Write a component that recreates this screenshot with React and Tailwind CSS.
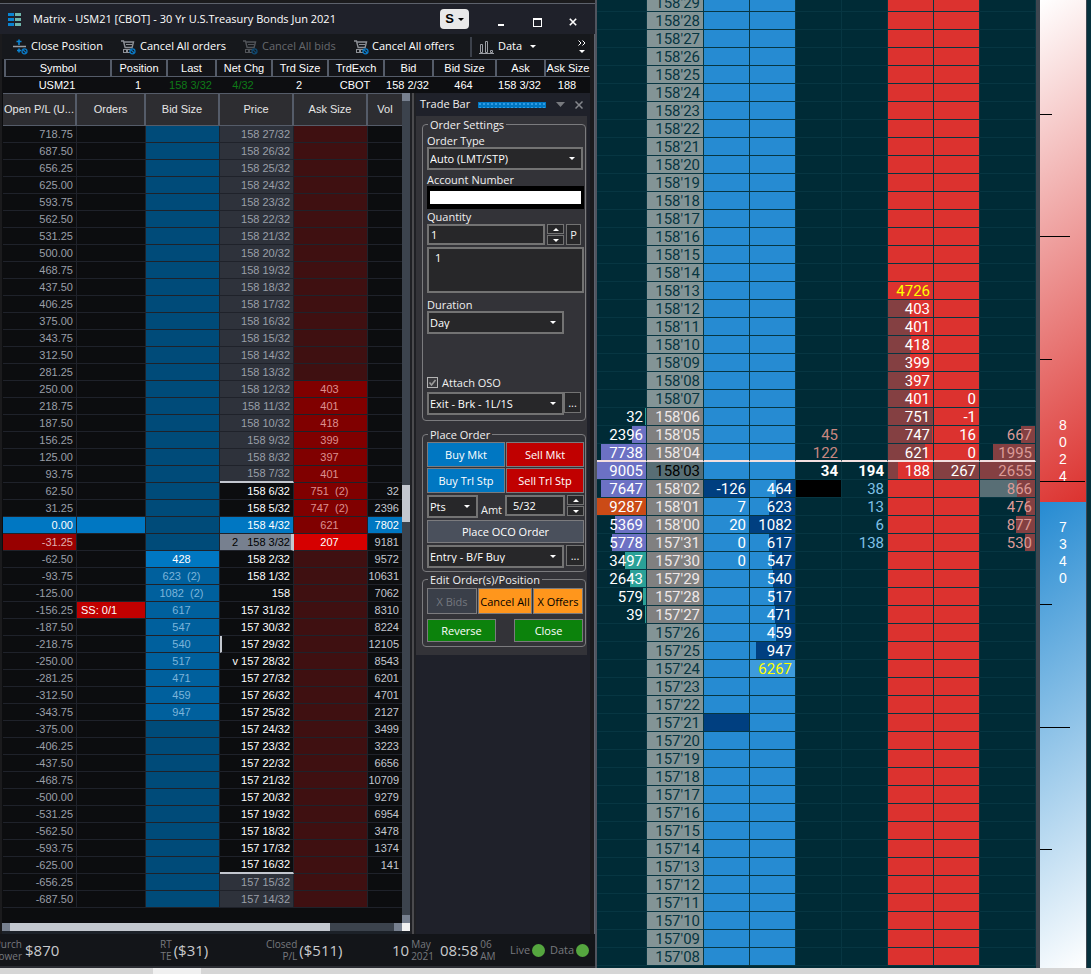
import React, { useState } from "react";
import clsx from "clsx";

const quote = [
  { label: "Symbol", value: "USM21", width: 106 },
  { label: "Position", value: "1", width: 56 },
  { label: "Last", value: "158 3/32", width: 49, up: true },
  { label: "Net Chg", value: "4/32", width: 56, up: true },
  { label: "Trd Size", value: "2", width: 56 },
  { label: "TrdExch", value: "CBOT", width: 56 },
  { label: "Bid", value: "158 2/32", width: 49 },
  { label: "Bid Size", value: "464", width: 63 },
  { label: "Ask", value: "158 3/32", width: 49 },
  { label: "Ask Size", value: "188", width: 46 },
];

// Matrix rows run one tick (1/32) at a time, from 158 27/32 down
const TOP_TICK = 158 * 32 + 27;
const ROW_COUNT = 46;
const ENTRY_ROW = 23;
const LAST_ROW = 24;
const HIGH_ROW = 21;
const LOW_ROW = 43;

const asks = {
  15: "403", 16: "401", 17: "418", 18: "399", 19: "397", 20: "401",
  21: "751  (2)", 22: "747  (2)", 23: "621", 24: "207",
};

const bids = {
  25: "428", 26: "623  (2)", 27: "1082  (2)", 28: "617", 29: "547",
  30: "540", 31: "517", 32: "471", 33: "459", 34: "947",
};

const volumes = [
  32, 2396, 7802, 9181, 9572, 10631, 7062, 8310, 8224, 12105, 8543, 6201,
  4701, 2127, 3499, 3223, 6656, 10709, 9279, 6954, 3478, 1374, 141,
];

const matrixRows = Array.from({ length: ROW_COUNT }, (_, i) => {
  const tick = TOP_TICK - i;
  const rest = tick % 32;
  return {
    i,
    pl: ((ENTRY_ROW - i) * 31.25).toFixed(2),
    price: Math.floor(tick / 32) + (rest ? ` ${rest}/32` : ""),
    bid: bids[i],
    ask: asks[i],
    vol: volumes[i - HIGH_ROW],
  };
});

const violet = "#6c71c4";
const teal = "#2aa198";
const orange = "#cb4b16";
const navy = "#003f80";
const maroon = "#844042";

// Depth rows by price; bars are [percent of the cell, colour]
const depth = {
  "158'13": { ask: "4726", askYellow: true },
  "158'12": { ask: "403", askBar: 50 },
  "158'11": { ask: "401", askBar: 50 },
  "158'10": { ask: "418", askBar: 52 },
  "158'09": { ask: "399", askBar: 50 },
  "158'08": { ask: "397", askBar: 49 },
  "158'07": { ask: "401", askBar: 50, askChg: "0" },
  "158'06": { vol: "32", volBar: [3, teal], ask: "751", askBar: 100, askChg: "-1" },
  "158'05": { vol: "2396", volBar: [29, violet], sold: "45", ask: "747", askBar: 97, askChg: "16", total: "667", totalBar: 25 },
  "158'04": { vol: "7738", volBar: [92, violet], sold: "122", ask: "621", askBar: 82, askChg: "0", total: "1995", totalBar: 76 },
  "158'03": { vol: "9005", volBar: [100, violet], sold: "34", bought: "194", ask: "188", askBar: 22, askChg: "267", total: "2655", totalBar: 100 },
  "158'02": { vol: "7647", volBar: [92, violet], bidChg: "-126", bid: "464", bidBar: 42, bought: "38", total: "866", totalBar: 32 },
  "158'01": { vol: "9287", volBar: [100, orange], bidChg: "7", bid: "623", bidBar: 58, bought: "13", total: "476", totalBar: 17 },
  "158'00": { vol: "5369", volBar: [64, violet], bidChg: "20", bid: "1082", bidBar: 100, bought: "6", total: "877", totalBar: 34 },
  "157'31": { vol: "5778", volBar: [70, violet], bidChg: "0", bid: "617", bidBar: 58, bought: "138", total: "530", totalBar: 19 },
  "157'30": { vol: "3497", volBar: [42, teal], bidChg: "0", bid: "547", bidBar: 51 },
  "157'29": { vol: "2643", volBar: [32, teal], bid: "540", bidBar: 49 },
  "157'28": { vol: "579", volBar: [7, teal], bid: "517", bidBar: 47 },
  "157'27": { vol: "39", volBar: [3, teal], bid: "471", bidBar: 44 },
  "157'26": { bid: "459", bidBar: 42 },
  "157'25": { bid: "947", bidBar: 87 },
  "157'24": { bid: "6267", bidYellow: true },
};

const depthPrices = Array.from({ length: 54 }, (_, i) => {
  const tick = 158 * 32 + 29 - i;
  return `${Math.floor(tick / 32)}'${String(tick % 32).padStart(2, "0")}`;
});

const bar = (side, percent, color) =>
  percent
    ? { backgroundImage: `linear-gradient(to ${side}, ${color} ${percent}%, transparent ${percent}%)` }
    : undefined;

const Caret = ({ className }) => (
  <svg viewBox="0 0 6 3" className={clsx("h-[3px] w-1.5 shrink-0", className)} fill="currentColor">
    <path d="M0 0h6L3 3z" />
  </svg>
);

const CartIcon = () => (
  <svg viewBox="0 0 16 16" className="h-4 w-4 shrink-0" fill="none">
    <path d="M1 2h2.5l1.6 6.5h7L13.5 3H4" stroke="#8d9096" strokeWidth="1.4" />
    <path d="M6 5.5h6" stroke="#8d9096" />
    <rect x="3.5" y="10.5" width="3" height="3" stroke="#8d9096" />
    <rect x="7.5" y="10.5" width="3" height="3" stroke="#8d9096" />
    <circle cx="12.5" cy="12.3" r="2.5" fill="#16181c" stroke="#0a78c4" strokeWidth="1.3" />
    <path d="M10.8 10.6l3.4 3.4" stroke="#0a78c4" strokeWidth="1.2" />
  </svg>
);

const ClosePositionIcon = () => (
  <svg viewBox="0 0 16 16" className="h-4 w-4 shrink-0" fill="none">
    <path d="M7 .5v5.500M4.500 2.500h5M7 9.500v4M5 11.500h4" stroke="#0a84d2" strokeWidth="1.600" />
    <path d="M1 7.500h13" stroke="#9a9da3" strokeWidth="1.500" />
    <circle cx="12.500" cy="12.300" r="2.500" fill="#16181c" stroke="#0a78c4" strokeWidth="1.300" />
    <path d="M10.800 10.600l3.400 3.400" stroke="#0a78c4" strokeWidth="1.200" />
  </svg>
);

const TitleBar = () => (
  <header className="flex h-[31px] items-center border-t border-[#5d626c] bg-[#1f212a] pr-3.5 pl-2 text-white">
    <svg viewBox="0 0 13 13" className="h-[13px] w-[13px] shrink-0">
      <path d="M0 0h6v3H0zM0 5h6v3H0zM0 10h6v3H0z" fill="#0a84d2" />
      <path d="M7 0h6v3H7zM7 5h6v3H7zM7 10h6v3H7z" fill="#6fb5ab" />
    </svg>
    <h1 className="ml-3 flex-1 truncate text-[11px]">
      Matrix - USM21 [CBOT] - 30 Yr U.S.Treasury Bonds Jun 2021
    </h1>
    <button className="mr-6 flex h-5 w-[29px] items-center justify-center gap-1 rounded-sm bg-[#e9e9e9] font-['Liberation_Sans',sans-serif] text-[13px] font-bold text-black">
      S <Caret />
    </button>
    <div className="flex items-center gap-5 pt-1.5">
      <button aria-label="Minimize" className="flex h-4 w-4 items-end justify-center pb-1">
        <span className="h-0.5 w-1.5 bg-white" />
      </button>
      <button aria-label="Maximize" className="flex h-4 w-4 items-center justify-center">
        <span className="h-[9px] w-[9px] border border-t-2 border-white" />
      </button>
      <button aria-label="Close" className="flex h-4 w-4 items-center justify-center">
        <svg viewBox="0 0 8 8" className="h-2 w-2" stroke="white" strokeWidth="1.600">
          <path d="M.8.8l6.400 6.400M7.200.8L.8 7.200" />
        </svg>
      </button>
    </div>
  </header>
);

const Toolbar = () => (
  <nav className="flex h-[25px] items-center bg-[#16181c] pr-1 pl-2.5 text-[11px] whitespace-nowrap text-white">
    <button className="flex w-[108px] items-center gap-[3px]">
      <ClosePositionIcon /> Close Position
    </button>
    <button className="flex w-[122px] items-center gap-1">
      <CartIcon /> Cancel All orders
    </button>
    <button disabled className="flex w-[111px] items-center gap-1 text-[#67696e] [&>svg]:opacity-50">
      <CartIcon /> Cancel All bids
    </button>
    <button className="flex w-[117px] items-center gap-[3px]">
      <CartIcon /> Cancel All offers
    </button>
    <button className="flex h-5 flex-1 items-center gap-1 border-l-2 border-[#3c414b] pl-[7px]">
      <svg viewBox="0 0 15 14" className="h-3.5 w-[15px] shrink-0" fill="none" stroke="#9a9da3">
        <path d="M1.500 12.500v-8h2v8zM6.500 12.500v-11h2v11zM11.500 12.500v-2h2v2zM0 13.500h15" />
      </svg>
      Data <Caret className="ml-1" />
    </button>
    <button aria-label="More commands" className="flex flex-col items-center gap-1">
      <svg viewBox="0 0 8 6" className="h-1.5 w-2" fill="none" stroke="white">
        <path d="M.5.5L3 3 .5 5.500M4.500.5L7 3 4.500 5.500" />
      </svg>
      <Caret />
    </button>
  </nav>
);

const QuoteTable = () => (
  <div className="bg-[#0d0e11] pl-0.5">
    <table className="w-full table-fixed border-separate border-spacing-0 text-center font-['Liberation_Sans',sans-serif] text-[11px] whitespace-nowrap text-white">
      <colgroup>
        {quote.map((q) => (
          <col key={q.label} style={{ width: q.width }} />
        ))}
      </colgroup>
      <thead>
        <tr>
          {quote.map((q) => (
            <th key={q.label} className="h-[18px] border-y border-l-2 border-[#555c69] bg-[#131418] p-0 leading-4 font-normal">
              {q.label}
            </th>
          ))}
        </tr>
      </thead>
      <tbody>
        <tr>
          {quote.map((q) => (
            <td key={q.label} className={clsx("h-4 p-0 leading-4", q.up && "text-[#0f7a18]")}>
              {q.value}
            </td>
          ))}
        </tr>
      </tbody>
    </table>
  </div>
);

const MatrixRow = ({ row }) => {
  const { i } = row;
  const entry = i === ENTRY_ROW;
  const last = i === LAST_ROW;
  const inRange = i >= HIGH_ROW && i <= LOW_ROW;
  const rangeEdge = i === HIGH_ROW - 1 || i === LOW_ROW;
  const cell = "h-[17px] border-r border-b border-[#1f222a] p-0 whitespace-pre";

  return (
    <tr className="leading-4">
      <td
        className={clsx(
          cell, "pr-[3px] text-right",
          entry ? "bg-[#0077c2] text-white" : last ? "bg-[#980000] text-[#e0b0b0]" : "bg-[#0c0d0f] text-[#9a9fa8]"
        )}
      >
        {row.pl}
      </td>
      <td className={clsx(cell, "pl-1", entry ? "bg-[#0077c2]" : i === 28 ? "bg-[#c00000] text-white" : "bg-[#0c0d0f]")}>
        {i === 28 && "SS: 0/1"}
      </td>
      <td
        className={clsx(
          cell, "pr-0.5 text-center",
          !row.bid ? "bg-[#004b79]" : i === 25 ? "bg-[#0077c2] text-white" : "bg-[#00609d] text-[#7cb4da]"
        )}
      >
        {row.bid}
      </td>
      <td
        className={clsx(
          cell, "text-right",
          entry && "bg-[#0077c2] text-white",
          last && "border-r-[3px] border-r-[#c3c7cf] bg-[#77808f] text-black",
          !entry && !last && (inRange ? "bg-[#0c0d0f] text-white" : "bg-[#2e323b] text-[#9a9fa8]"),
          last ? "pr-px" : "pr-[3px]",
          rangeEdge && "border-b-2 border-b-[#c3c7cf] leading-[15px]",
          i === 30 && "border-l-2 border-l-[#c3c7cf]"
        )}
      >
        {last && "2   "}
        {i === 31 && "v "}
        {row.price}
      </td>
      <td
        className={clsx(
          cell, "pr-0.5 text-center",
          !row.ask ? "bg-[#3f1011]" : last ? "bg-[#d60000] text-white" : "bg-[#800000] text-[#dc9090]"
        )}
      >
        {row.ask}
      </td>
      <td className={clsx(cell, "border-r-0 pr-[3px] text-right", entry ? "bg-[#0077c2] text-white" : "bg-[#0c0d0f] text-[#c3c7cf]")}>
        {row.vol}
      </td>
    </tr>
  );
};

const Matrix = () => (
  <section className="flex min-w-0 flex-1 flex-col bg-[#0c0d0f]">
    <div className="flex flex-1">
      <table className="ml-px w-full flex-1 table-fixed self-start border-separate border-spacing-0 font-['Liberation_Sans',sans-serif] text-[11px]">
        <colgroup>
          <col style={{ width: 74 }} />
          <col style={{ width: 69 }} />
          <col style={{ width: 74 }} />
          <col style={{ width: 74 }} />
          <col style={{ width: 74 }} />
          <col style={{ width: 34 }} />
        </colgroup>
        <thead>
          <tr>
            {["Open P/L (U...", "Orders", "Bid Size", "Price", "Ask Size", "Vol"].map((h) => (
              <th key={h} className="h-[33px] border-y border-r-2 border-[#555c69] bg-[#2d2d31] p-0 font-normal whitespace-nowrap text-[#e6e6e6] last:border-r-0">
                {h}
              </th>
            ))}
          </tr>
        </thead>
        <tbody>
          {matrixRows.map((row) => (
            <MatrixRow key={row.i} row={row} />
          ))}
        </tbody>
      </table>
      <div className="flex w-2 flex-col bg-[#3c434d]">
        <span className="h-2 bg-[#77808f]" />
        <span className="grow-384" />
        <span className="h-[37px] bg-[#c3c7cf]" />
        <span className="grow-393" />
        <span className="h-2 bg-[#77808f]" />
      </div>
    </div>
    <div className="flex h-2 bg-[#3c434d]">
      <span className="w-2 bg-[#77808f]" />
      <span className="grow-5 bg-[#c3c7cf]" />
      <span className="grow" />
      <span className="w-2 bg-[#77808f]" />
      <span className="w-2 bg-[#f2f2f2]" />
    </div>
    <div className="h-[3px] bg-[#1c2128]" />
  </section>
);

const Select = ({ id, options, label, className }) => (
  <div className={clsx("relative", className)}>
    <select
      id={id}
      aria-label={label}
      className="block h-[23px] w-full appearance-none border-2 border-[#737373] bg-[#272729] pl-px text-white outline-none"
    >
      {options.map((o) => (
        <option key={o}>{o}</option>
      ))}
    </select>
    <Caret className="pointer-events-none absolute top-2.5 right-2 text-white" />
  </div>
);

const Spinner = ({ onStep, label }) => (
  <div className="flex h-[21px] w-[17px] flex-col gap-px">
    <button aria-label={`${label} up`} onClick={() => onStep(1)} className="flex flex-1 items-center justify-center border border-[#737373] bg-[#272729] text-white">
      <Caret className="rotate-180" />
    </button>
    <button aria-label={`${label} down`} onClick={() => onStep(-1)} className="flex flex-1 items-center justify-center border border-[#737373] bg-[#272729] text-white">
      <Caret />
    </button>
  </div>
);

const Group = ({ title, className, children }) => (
  <fieldset className={clsx("rounded border border-[#7b7b7e] pr-px pl-1", className)}>
    <legend className="ml-px px-0.5 leading-[13px]">{title}</legend>
    {children}
  </fieldset>
);

const actionButton = "border border-[#7b7b7e] text-center whitespace-nowrap";

const TradeBar = () => {
  const [quantity, setQuantity] = useState(1);
  const [amount, setAmount] = useState(5);
  const [attachOso, setAttachOso] = useState(true);

  return (
    <aside className="w-[174px] shrink-0 bg-[#1f212a] text-[11px] text-[#f0f0f0]">
      <div className="flex h-[23px] items-center gap-2.5 pr-[7px] pl-1">
        <h2 className="w-12 whitespace-nowrap">Trade Bar</h2>
        <span className="h-1.5 flex-1 bg-[#0077c2] bg-[radial-gradient(#2f9be4_1px,transparent_1px)] bg-size-[4px_4px]" />
        <svg viewBox="0 0 9 5" className="h-[5px] w-[9px] text-[#77797e]" fill="currentColor">
          <path d="M0 0h9L4.500 5z" />
        </svg>
        <button aria-label="Close trade bar">
          <svg viewBox="0 0 8 8" className="h-2 w-2" stroke="#85878c" strokeWidth="1.500">
            <path d="M.5.5l7 7M7.500.5l-7 7" />
          </svg>
        </button>
      </div>

      <div className="mr-[3px] bg-[#333338] pt-0.5 pr-px pb-2 pl-1.5 leading-[13px]">
        <Group title="Order Settings" className="h-[303px]">
          <label htmlFor="order-type" className="mt-[3px] block">Order Type</label>
          <Select id="order-type" options={["Auto (LMT/STP)", "Market", "Limit"]} className="mr-px" />
          <label htmlFor="account" className="mt-[3px] block">Account Number</label>
          <input id="account" className="block h-[23px] w-full border-x-3 border-y-[5px] border-black bg-white text-black outline-none" />
          <label htmlFor="quantity" className="mt-px block">Quantity</label>
          <div className="mt-px mr-[3px] flex items-start gap-0.5">
            <input
              id="quantity"
              value={quantity}
              onChange={(e) => setQuantity(Number(e.target.value) || 0)}
              className="h-[21px] w-0 flex-1 border-2 border-[#737373] bg-[#272729] px-0.5 text-white outline-none"
            />
            <Spinner label="Quantity" onStep={(d) => setQuantity(Math.max(0, quantity + d))} />
            <button className="h-[21px] w-[15px] border border-[#737373] bg-[#272729]">P</button>
          </div>
          <textarea
            aria-label="Quantity presets"
            defaultValue="1"
            className="mt-0.5 block h-[46px] w-full resize-none border-2 border-[#737373] bg-[#272729] px-1.5 py-0.5 text-white outline-none"
          />
          <label htmlFor="duration" className="mt-[5px] block">Duration</label>
          <Select id="duration" options={["Day", "GTC"]} className="mr-5" />
          <label className="mt-[42px] flex items-center gap-1">
            <span className="relative block h-[11px] w-[11px]">
              <input
                type="checkbox"
                checked={attachOso}
                onChange={(e) => setAttachOso(e.target.checked)}
                className="block h-[11px] w-[11px] appearance-none border border-[#b4b4b4] bg-[#3a3a3e]"
              />
              {attachOso && (
                <svg viewBox="0 0 11 11" className="pointer-events-none absolute inset-0" fill="none" stroke="#9b9b9b" strokeWidth="1.600">
                  <path d="M2.500 5.500l2 2.500 4-5" />
                </svg>
              )}
            </span>
            Attach OSO
          </label>
          <div className="mt-[3px] mr-[3px] flex items-start">
            <Select label="Exit strategy" options={["Exit - Brk - 1L/1S"]} className="flex-1" />
            <button className="h-[21px] w-[17px] border border-[#737373] bg-[#272729]">...</button>
          </div>
        </Group>

        <Group title="Place Order" className="mt-[7px] h-36">
          <div className="mt-px grid grid-cols-2 gap-px text-white">
            <button className={clsx(actionButton, "h-[25px] bg-[#0077c2]")}>Buy Mkt</button>
            <button className={clsx(actionButton, "h-[25px] bg-[#c00000]")}>Sell Mkt</button>
            <button className={clsx(actionButton, "h-[25px] bg-[#0077c2]")}>Buy Trl Stp</button>
            <button className={clsx(actionButton, "h-[25px] bg-[#c00000]")}>Sell Trl Stp</button>
          </div>
          <div className="mt-0.5 flex items-start gap-0.5">
            <Select label="Trail unit" options={["Pts", "Pct"]} className="w-[51px]" />
            <label htmlFor="amount" className="mt-2 flex-1 text-center">Amt</label>
            <input
              id="amount"
              value={`${amount}/32`}
              readOnly
              className="h-[21px] w-[60px] border-2 border-[#737373] bg-[#272729] px-1.5 text-white outline-none"
            />
            <Spinner label="Amount" onStep={(d) => setAmount(Math.max(1, amount + d))} />
          </div>
          <button className={clsx(actionButton, "mt-0.5 block h-[23px] w-full bg-[#4a505c] text-white")}>
            Place OCO Order
          </button>
          <div className="mt-0.5 flex items-start gap-0.5">
            <Select label="Entry strategy" options={["Entry - B/F Buy"]} className="flex-1" />
            <button className="h-[21px] w-[18px] border border-[#737373] bg-[#272729]">...</button>
          </div>
        </Group>

        <Group title="Edit Order(s)/Position" className="mt-px h-[74px]">
          <div className="mt-0.5 mr-px flex gap-px">
            <button disabled className={clsx(actionButton, "h-[26px] flex-1 bg-[#3a3f49] text-[#74787f]")}>X Bids</button>
            <button className={clsx(actionButton, "h-[26px] w-[54px] bg-[#ff961c] text-black")}>Cancel All</button>
            <button className={clsx(actionButton, "h-[26px] flex-1 bg-[#ff961c] text-black")}>X Offers</button>
          </div>
          <div className="mt-[5px] mr-px flex justify-between text-white">
            <button className={clsx(actionButton, "h-[23px] w-[69px] bg-[#0c820c]")}>Reverse</button>
            <button className={clsx(actionButton, "h-[23px] w-[69px] bg-[#0c820c]")}>Close</button>
          </div>
        </Group>
      </div>
    </aside>
  );
};

const Small = ({ top, bottom, className }) => (
  <span className={clsx("text-[10px] leading-3 text-[#77797e]", className)}>
    {top}
    <br />
    {bottom}
  </span>
);

const StatusBar = () => (
  <footer className="grid h-[34px] grid-cols-[160fr_106fr_126fr_48fr_70fr_40fr_45fr] items-center overflow-hidden border-b-2 border-[#2b2d33] bg-[#131519] text-[15px] whitespace-nowrap text-[#c9cacd]">
    <span className="flex items-center gap-[3px]">
      <span className="flex w-[22px] justify-end">
        <Small top="Purch" bottom="Power" className="text-right" />
      </span>
      $870
    </span>
    <span className="flex items-center gap-0.5">
      <Small top="RT" bottom="TE" className="text-right" /> ($31)
    </span>
    <span className="flex items-center gap-0.5">
      <Small top="Closed" bottom="P/L" className="text-right" /> ($511)
    </span>
    <span className="flex items-center gap-0.5">
      10 <Small top="May" bottom="2021" />
    </span>
    <span className="flex items-center gap-0.5">
      08:58 <Small top="06" bottom="AM" />
    </span>
    <span className="flex items-center gap-0.5 text-[11px] text-[#77797e]">
      Live <span className="h-[13px] w-[13px] rounded-full bg-[#55a63f]" />
    </span>
    <span className="flex items-center gap-0.5 text-[11px] text-[#77797e]">
      Data <span className="h-[13px] w-[13px] rounded-full bg-[#55a63f]" />
    </span>
  </footer>
);

const MatrixWindow = () => (
  <div className="flex min-w-0 flex-595 flex-col border-r-2 border-[#50545e] bg-[#1b1b1d] pt-[3px] font-['Open_Sans','Noto_Sans',sans-serif]">
    <TitleBar />
    <div className="flex flex-1 flex-col border-r border-[#5d626c] pr-1 pl-0.5">
      <Toolbar />
      <QuoteTable />
      <div className="flex flex-1">
        <Matrix />
        <div className="w-1.5 border-x-2 border-[#1f2024] bg-[#4b4b4e]" />
        <TradeBar />
      </div>
    </div>
    <StatusBar />
  </div>
);

const DepthRow = ({ price }) => {
  const d = depth[price] || {};
  const last = price === "158'03";
  const traded = Boolean(d.vol);
  const cell = clsx(
    "h-[18px] p-0 pr-[3px] border-r border-r-[#073642]",
    price === "158'04" ? "border-b-2 border-b-[#f3e0e0] pt-0.5 leading-[14px]" : "border-b border-b-[#073642] leading-4"
  );

  return (
    <tr>
      <td className={clsx(cell, "text-white")} style={d.volBar && bar("left", ...d.volBar)}>{d.vol}</td>
      <td
        className={clsx(
          cell,
          last ? "bg-[#586e75] text-black" : traded ? "bg-[#808080] text-[#eee8e8]" : "bg-[#839496] text-[#073642]"
        )}
      >
        {price}
      </td>
      <td className={clsx(cell, "text-white", price === "158'02" || price === "157'21" ? "bg-[#003f80]" : "bg-[#268bd2]")}>
        {d.bidChg}
      </td>
      <td
        className={clsx(cell, d.bidYellow ? "bg-[#3d9bdc] text-[#ffff00]" : "bg-[#268bd2] text-white")}
        style={bar("left", d.bidBar, navy)}
      >
        {d.bid}
      </td>
      <td className={clsx(cell, last ? "font-bold text-white" : "text-[#c98780]", price === "158'02" && "bg-black")}>{d.sold}</td>
      <td className={clsx(cell, last ? "font-bold text-white" : "text-[#7fc0e6]")}>{d.bought}</td>
      <td
        className={clsx(cell, "bg-[#dc322f]", d.askYellow ? "text-[#ffff00]" : "text-white")}
        style={bar("right", d.askBar, maroon)}
      >
        {d.ask}
      </td>
      <td className={clsx(cell, "text-white", last ? "bg-[#844042]" : "bg-[#dc322f]")}>{d.askChg}</td>
      <td className={clsx(cell, "text-[#dc9a96]", price === "158'02" && "bg-[#586e75]")} style={bar("left", d.totalBar, maroon)}>
        {d.total}
      </td>
    </tr>
  );
};

const DepthLadder = () => (
  <div className="min-w-0 flex-1 overflow-hidden bg-[#002b36]">
    <table className="-mt-1.5 w-full table-fixed border-separate border-spacing-0 text-right font-[Roboto,sans-serif] text-[15px]">
      <colgroup>
        <col style={{ width: 50 }} />
        <col style={{ width: 57 }} />
        <col style={{ width: 46 }} />
        <col style={{ width: 46 }} />
        <col style={{ width: 46 }} />
        <col style={{ width: 46 }} />
        <col style={{ width: 46 }} />
        <col style={{ width: 46 }} />
        <col style={{ width: 56 }} />
      </colgroup>
      <tbody>
        {depthPrices.map((price) => (
          <DepthRow key={price} price={price} />
        ))}
      </tbody>
    </table>
  </div>
);

const GAUGE_HEIGHT = 968;

const ticks = [
  { y: 114, width: 12 },
  { y: 236, width: 30 },
  { y: 359, width: 12 },
  { y: 481, width: 45 },
  { y: 604, width: 12 },
  { y: 727, width: 30 },
  { y: 849, width: 12 },
];

const Digits = ({ value }) => (
  <span className="flex flex-col items-center">
    {value.split("").map((digit, i) => (
      <span key={i}>{digit}</span>
    ))}
  </span>
);

const PressureGauge = () => (
  <div className="relative flex w-[46px] shrink-0 flex-col font-['Liberation_Sans',sans-serif] text-[14px] leading-[17px] text-white">
    <div className="flex flex-503 flex-col justify-end bg-linear-[145deg,#ffffff,#dc322f] pb-[17px]">
      <Digits value="8024" />
    </div>
    <div className="flex flex-465 flex-col bg-linear-[145deg,#268bd2,#ffffff] pt-[17px]">
      <Digits value="7340" />
    </div>
    {ticks.map((t) => (
      <span
        key={t.y}
        className="absolute left-0 h-px bg-black"
        style={{ top: `${(t.y / GAUGE_HEIGHT) * 100}%`, width: t.width }}
      />
    ))}
  </div>
);

export default function App() {
  return (
    <div className="flex min-h-screen flex-col bg-[#1b1b1d]">
      <main className="flex flex-1">
        <MatrixWindow />
        <div className="flex min-w-0 flex-494 bg-[#002b36]">
          <DepthLadder />
          <div className="w-1 bg-[#3d4650]" />
          <PressureGauge />
          <div className="w-[5px] border-l border-[#3d4650] bg-[#06303c]" />
        </div>
      </main>
      <div className="flex h-1.5 bg-[#d6d6d6]">
        <span className="ml-[14%] w-12 bg-[#f0f0f0]" />
      </div>
    </div>
  );
}
